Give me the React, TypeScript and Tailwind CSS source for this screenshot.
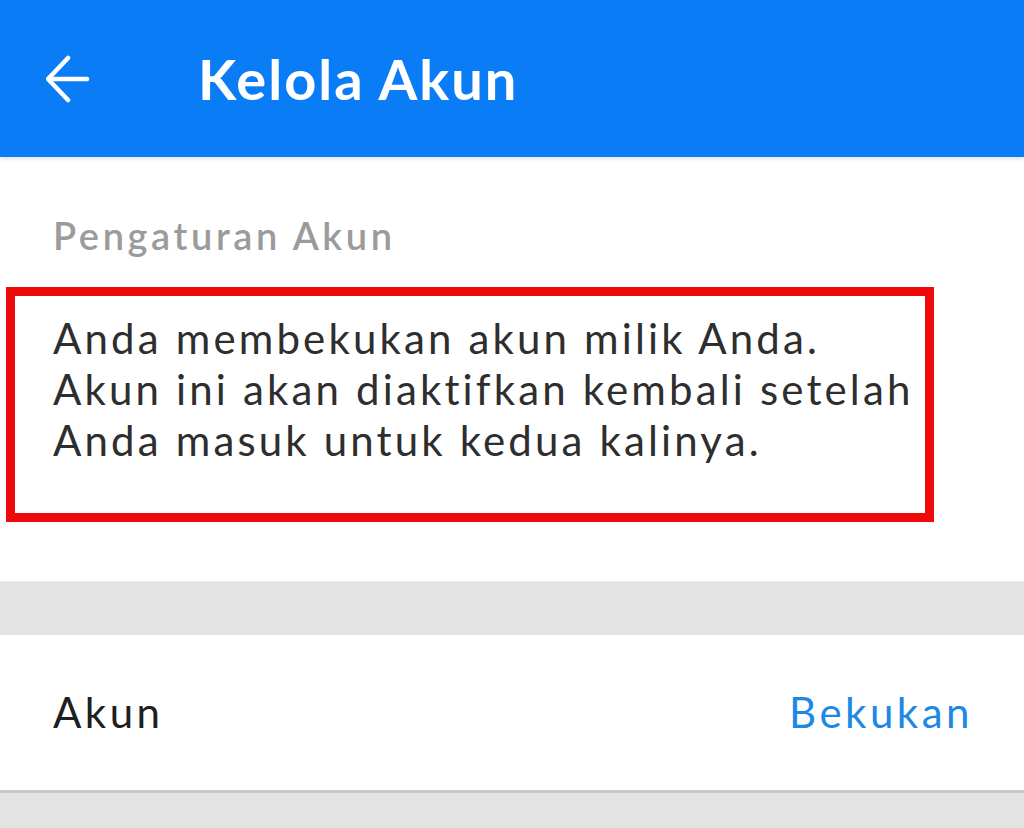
import React from 'react';

function BackArrow() {
  return (
    <svg width="44" height="48" viewBox="0 0 44 48" fill="none" stroke="white" strokeWidth="4.5" strokeLinecap="round" strokeLinejoin="round">
      <path d="M3 24h38" />
      <path d="M22 3L2 24l20 21" />
    </svg>
  );
}

export default function App() {
  return (
    <div className="w-[1024px] h-[828px] overflow-hidden bg-white font-['Lato',sans-serif]">
      <header className="h-[157px] bg-[#0a7cf5] flex items-center pl-[46px] shadow-[0_2px_4px_rgba(0,0,0,0.12)] relative z-10">
        <BackArrow />
        <h1 className="ml-[108px] text-white text-[56px] font-bold tracking-[2px] leading-none">Kelola Akun</h1>
      </header>

      <section className="pt-[59px]">
        <h2 className="pl-[53px] text-[#9b9b9b] text-[38px] font-semibold tracking-[3.6px] leading-none">Pengaturan Akun</h2>
        <div className="mt-[33px] ml-[6px] w-[928px] h-[235px] border-[9px] border-[#ee0a0a] pl-[38px] pt-[17px]">
          <p className="text-[#2e2e2e] text-[42px] leading-[51px] tracking-[3.15px]">
            Anda membekukan akun milik Anda.<br />
            Akun ini akan diaktifkan kembali setelah<br />
            Anda masuk untuk kedua kalinya.
          </p>
        </div>
      </section>

      <div className="mt-[59px] h-[54px] bg-[#e3e3e3] border-t border-[#ececec]" />

      <div className="h-[155px] flex items-center justify-between pl-[53px] pr-[51px] text-[42px] tracking-[3.5px]">
        <span className="text-[#1f1f1f]">Akun</span>
        <span className="text-[#1e88e5]">Bekukan</span>
      </div>

      <div className="h-[40px] bg-[#e3e3e3] border-t-[3px] border-[#c9c9c9]" />
    </div>
  );
}
